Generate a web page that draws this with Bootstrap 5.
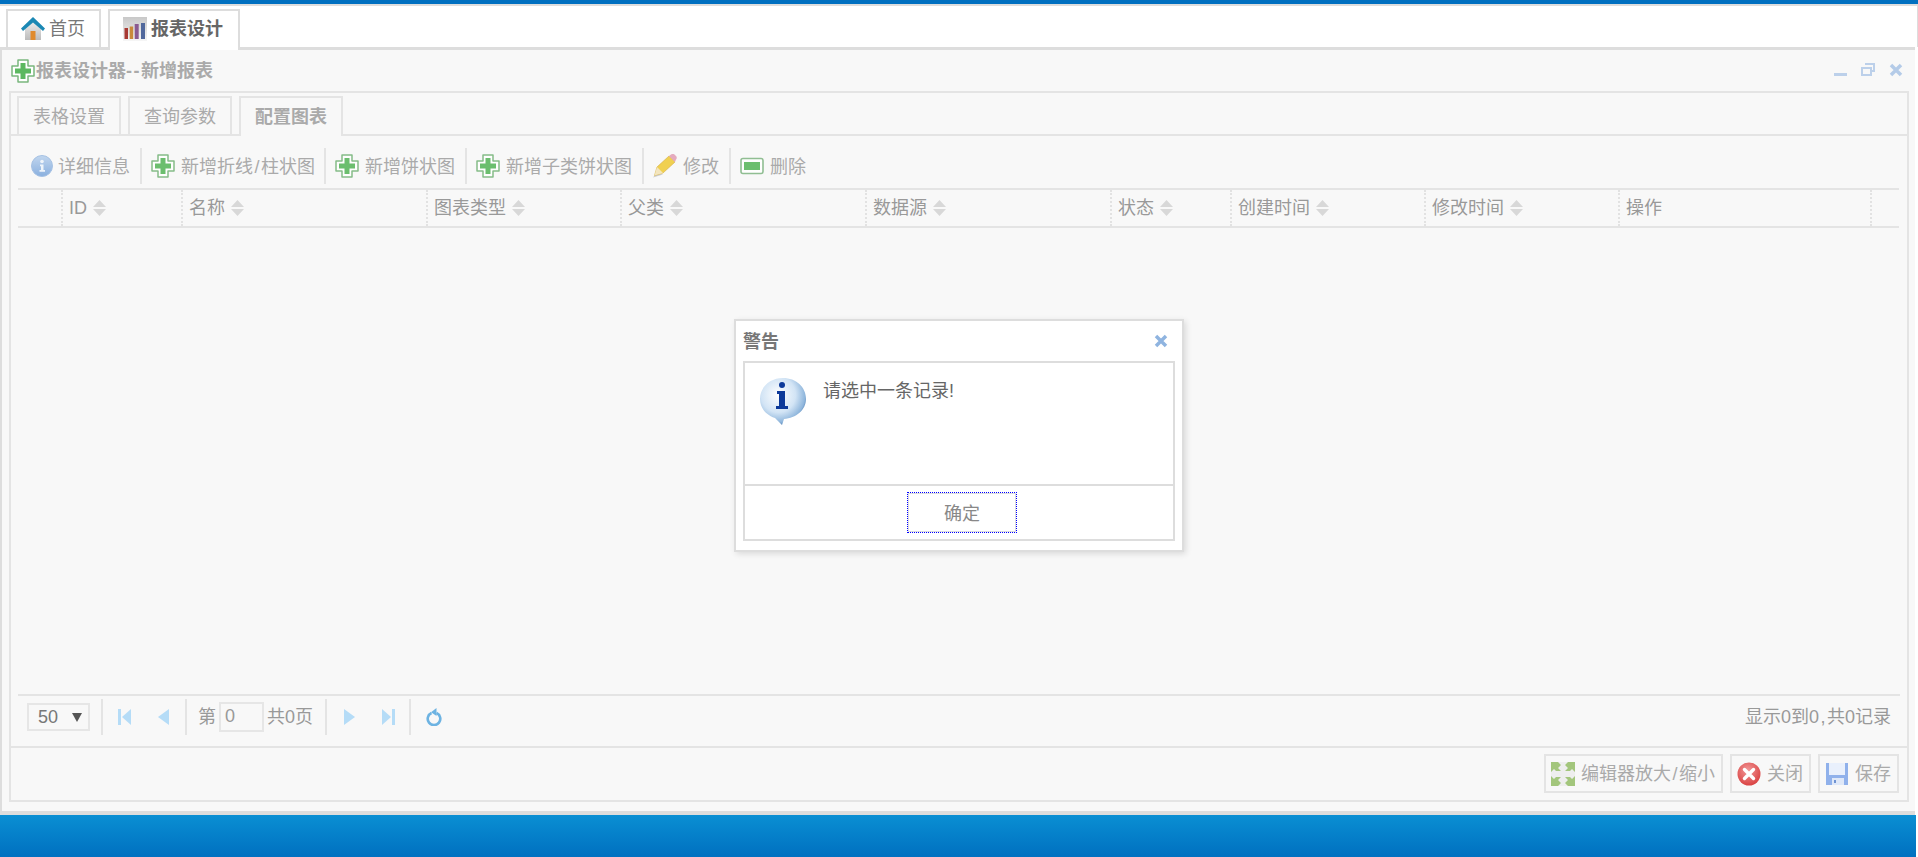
<!DOCTYPE html>
<html lang="zh-CN">
<head>
    <meta charset="UTF-8">
    <meta name="viewport" content="width=device-width, initial-scale=1.0">
    <title>报表设计</title>
    <link rel="stylesheet" href="https://cdn.jsdelivr.net/npm/bootstrap@5.3.0/dist/css/bootstrap.min.css">
    <style>
        html, body { height: 857px; overflow: hidden; }
        body {
            width: 1918px;
            background: #fff;
            font-family: "Liberation Sans", "Noto Sans CJK SC", sans-serif;
            font-size: 18px;
            line-height: 24px;
            color: #999;
            position: relative;
        }
        .svg-defs { width: 0; height: 0; display: block; }
        .ico-24 { width: 24px; height: 24px; flex: none; }
        .wide-slash { padding: 0 1.5px; }
        .wide-dash { letter-spacing: 1.5px; }

        /* top tab strip */
        .top-strip {
            height: 47px;
            border-top: 4px solid #0070c0;
            box-shadow: inset 0 2px 0 #ddd, inset -1px 0 0 #ddd;
            padding: 5px 0 0 6px;
            gap: 7px;
        }
        .top-tab {
            height: 38px;
            padding: 6px 14px 0 13px;
            gap: 4px;
            border: 2px solid #ddd;
            border-bottom: 0;
            color: #777;
        }
        .top-tab.on { height: 41px; font-weight: 700; color: #666; padding-right: 15px; z-index: 1; background: #fff; }

        /* main panel */
        .main-panel {
            height: 768px;
            margin-right: 3px;
            background: #f8f8f8;
            border: solid #ddd;
            border-width: 3px 0 4px 2px;
            padding: 0 6px 9px 7px;
        }
        .panel-head { height: 41px; padding-left: 2px; color: #aaa; font-weight: 700; }
        .panel-head .ttl { margin-left: 1px; }
        .win-btns { gap: 14px; padding-right: 6px; padding-bottom: 2px; }
        .win-btns svg { width: 14px; height: 14px; }
        .panel-box { border: 2px solid #e4e4e4; }

        /* inner tabs */
        .inner-tabs { height: 43px; padding: 3px 0 0 6px; gap: 7px; border-bottom: 2px solid #e4e4e4; }
        .inner-tab { width: 104px; height: 39px; border: 2px solid #e4e4e4; border-bottom: 0; color: #aaa; line-height: 38px; text-align: center; }
        .inner-tab.on { height: 40px; margin-bottom: -2px; background: #f8f8f8; font-weight: 700; }

        /* toolbar */
        .tool-row { height: 52px; padding: 12px 0 4px 12px; margin: 0 7px; color: #aaa; }
        .tool-item { gap: 6px; padding-right: 10px; }
        .tool-item:first-child { gap: 4px; }
        .tool-item:nth-child(2) { padding-right: 9px; }
        .tool-item + .tool-item { padding-left: 9px; border-left: 2px solid #e4e4e4; }
        .tool-item span { padding-top: 2px; }
        .tool-item svg { opacity: .9; }

        /* grid */
        .grid-wrap { margin: 0 7px; }
        .grid-head { table-layout: fixed; width: 1881px; margin: 0; --bs-table-bg: transparent; --bs-table-color: #999; }
        .grid-head th {
            height: 38px;
            padding: 0 0 0 6px;
            font-weight: 400;
            vertical-align: middle;
            border-top: 2px solid #e4e4e4;
            border-bottom: 2px solid #e4e4e4;
            border-left: 2px dotted #e2e2e2;
            white-space: nowrap;
        }
        .grid-head th:first-child { border-left: 0; }
        .sort-ico { width: 13px; height: 16px; margin-left: 5.5px; vertical-align: -2px; }
        .c-chk { width: 44px; } .c-id { width: 120px; } .c-name { width: 245px; } .c-type { width: 194px; }
        .c-par { width: 245px; } .c-src { width: 245px; } .c-st { width: 120px; } .c-cr { width: 194px; }
        .c-up { width: 194px; } .c-op { width: 252px; } .c-end { width: 28px; }

        /* pager */
        .pager-row {
            height: 52px;
            margin: 0 7px;
            padding: 3px 9px 11px 9px;
            border-top: 2px solid #e4e4e4;
        }
        .page-sel { width: 63px; height: 28px; border: 2px solid #e6e6e6; padding-left: 9px; color: #777; line-height: 24px; }
        .page-sel svg { margin-left: 14px; vertical-align: 1px; }
        .pg-sep { width: 2px; height: 36px; background: #e4e4e4; flex: none; }
        .pg-in { width: 45px; height: 30px; margin: 0 3px; border: 2px solid #e6e6e6; padding-left: 4px; color: #999; line-height: 24px; }
        .pg-ico { flex: none; }
        .gap-l11 { margin-left: 11px; }
        .gap-l12 { margin-left: 12px; }
        .gap-l14 { margin-left: 14px; }
        .gap-l15 { margin-left: 15px; }
        .gap-l16 { margin-left: 16px; }
        .gap-l17 { margin-left: 17px; }
        .gap-l27 { margin-left: 27px; }

        /* bottom buttons */
        .foot-row { height: 54px; padding: 6px 8px 0 0; gap: 7px; border-top: 2px solid #e4e4e4; justify-content: flex-end; }
        .foot-btn {
            height: 39px;
            padding: 1px 6px 0 5px;
            gap: 6px;
            --bs-btn-border-radius: 0;
            --bs-btn-border-width: 2px;
            --bs-btn-border-color: #e4e4e4;
            --bs-btn-color: #aaa;
            --bs-btn-font-size: 18px;
            --bs-btn-line-height: 24px;
        }
        .bot-band { height: 42px; margin-right: 2px; background: linear-gradient(#0a8fd3, #0070c0); }

        /* dialog */
        .dlg {
            position: absolute;
            left: 734px;
            top: 319px;
            width: 450px;
            height: 233px;
            background: #fff;
            border: 2px solid #ddd;
            box-shadow: 2px 2px 6px rgba(0, 0, 0, .12);
            padding: 0 7px;
        }
        .dlg-head { height: 40px; color: #777; font-weight: 700; padding-top: 2px; }
        .dlg-head svg { width: 14px; height: 14px; margin-right: 7px; margin-bottom: 2px; }
        .dlg-box { height: 180px; border: 2px solid #ddd; }
        .dlg-msg { height: 123px; padding: 14px 0 0 14px; gap: 16px; color: #666; border-bottom: 2px solid #ddd; }
        .dlg-msg svg { width: 48px; height: 48px; }
        .dlg-msg span { padding-top: 2px; }
        .dlg-foot { padding-top: 6px; }
        .dlg-ok {
            width: 110px;
            height: 41px;
            margin-left: 6px;
            padding: 8px 0 6px;
            --bs-btn-border-radius: 0;
            --bs-btn-border-width: 1px;
            --bs-btn-color: #888;
            --bs-btn-font-size: 18px;
            --bs-btn-line-height: 24px;
            border: 1px dotted #00f;
            box-shadow: inset 0 0 0 1px #ddd;
        }
    </style>
</head>
<body class="d-flex flex-column">
    <svg class="svg-defs">
        <defs>
            <linearGradient id="gBall" x1="0" y1="0" x2="0" y2="1"><stop offset="0" stop-color="#bcd3ee"/><stop offset="1" stop-color="#7ea8dc"/></linearGradient>
            <radialGradient id="gBub" cx=".4" cy=".36" r=".68"><stop offset="0" stop-color="#fff"/><stop offset=".55" stop-color="#d2e4f5"/><stop offset=".85" stop-color="#8fb6dc"/><stop offset="1" stop-color="#3f6fa8"/></radialGradient>
            <radialGradient id="gRed" cx=".45" cy=".35" r=".7"><stop offset="0" stop-color="#f29a9a"/><stop offset="1" stop-color="#d83c3c"/></radialGradient>
            <linearGradient id="gWall" x1="0" y1="0" x2="0" y2="1"><stop offset="0" stop-color="#eee"/><stop offset="1" stop-color="#bbb"/></linearGradient>
            <linearGradient id="gChart" x1="0" y1="0" x2="0" y2="1"><stop offset="0" stop-color="#c8c8c8"/><stop offset="1" stop-color="#f6f6f6"/></linearGradient>
        </defs>
        <symbol id="i-home" viewBox="0 0 24 24">
            <path d="M4 11 12 4l8 7v12H4z" fill="url(#gWall)"/>
            <rect x="9.500" y="14" width="5" height="9" fill="#e08a2c"/>
            <path d="M12 0 0 11.500l2 2.500L12 5.500 22 14l2-2.500z" fill="#1b88b4"/>
        </symbol>
        <symbol id="i-chart" viewBox="0 0 24 24">
            <rect x="0" y="0" width="24" height="24" fill="url(#gChart)"/>
            <rect x="1.500" y="11" width="3.500" height="11" fill="#a83a34"/>
            <rect x="6.700" y="9.500" width="3.500" height="12.500" fill="#c98a3a"/>
            <rect x="11.700" y="7" width="4" height="15" fill="#8a5a90"/>
            <rect x="18" y="6" width="4" height="16" fill="#51689c"/>
        </symbol>
        <symbol id="i-plus" viewBox="0 0 24 24">
            <path d="M7 1h10v6h6v10h-6v6H7v-6H1V7h6z" fill="#fff" stroke="#7ab67d" stroke-width="1.500" stroke-linejoin="round"/>
            <path d="M9.500 4h5v5.500H20v5h-5.500V20h-5v-5.500H4v-5h5.500z" fill="#5cb860"/>
        </symbol>
        <symbol id="i-info" viewBox="0 0 24 24">
            <circle cx="12" cy="12" r="10.500" fill="url(#gBall)" stroke="#9dbce2"/>
            <circle cx="12" cy="7.500" r="1.800" fill="#eef4fb"/>
            <path d="M10 10.500h3.500V16H15v1.800H9.500V16H11v-3.800h-1z" fill="#eef4fb"/>
        </symbol>
        <symbol id="i-pencil" viewBox="0 0 24 24">
            <path d="M0 23.500l10-3-6-2z" fill="#c8c8c8"/>
            <path d="M1.500 21.500 4 13 16 2l6 6L10 19z" fill="#f0cc40" stroke="#d2a830" stroke-width=".6"/>
            <path d="M1.500 21.500 4 13l6 6z" fill="#f3e3b8"/>
            <path d="M16 2l2-1.500c1-.8 2.500-.8 3.500 0l1.500 1.500c1 1 1 2.500 0 3.500L22 8z" fill="#e3a3b8"/>
        </symbol>
        <symbol id="i-minus" viewBox="0 0 24 24">
            <rect x="1" y="4.500" width="22" height="15" rx="2" fill="#fff" stroke="#85b888" stroke-width="1.600"/>
            <rect x="4" y="8" width="16" height="8" fill="#5cb860"/>
        </symbol>
        <symbol id="i-grow" viewBox="0 0 24 24">
            <rect width="24" height="24" fill="#eee"/>
            <path d="M0 0h7l3 3-3 3 3 3H5L3 7 0 10zM24 0h-7l-3 3 3 3-3 3h5l2-2 3 3zM0 24h7l3-3-3-3 3-3H5l-2 2-3-3zM24 24h-7l-3-3 3-3-3-3h5l2 2 3-3z" fill="#a3c67c"/>
        </symbol>
        <symbol id="i-close" viewBox="0 0 24 24">
            <circle cx="12" cy="12" r="11.500" fill="url(#gRed)"/>
            <path d="M7.500 7.500l9 9m0-9-9 9" stroke="#fff" stroke-width="3.400" stroke-linecap="round"/>
        </symbol>
        <symbol id="i-save" viewBox="0 0 24 24">
            <rect x="1" y="1" width="22" height="22" fill="#90b1eb"/>
            <rect x="4" y="1" width="16" height="12" fill="#e9f0fc"/>
            <rect x="7" y="16" width="12" height="7" fill="#dfe8f8"/>
            <rect x="9" y="18" width="2" height="3" fill="#6f93d2"/>
        </symbol>
        <symbol id="i-bubble" viewBox="0 0 48 48">
            <path d="M24 1C11 1 1 10 1 22c0 9 6 16 15 19l7 7 2-6c12-1 22-9 22-20C47 10 37 1 24 1z" fill="url(#gBub)"/>
            <circle cx="23" cy="8" r="3" fill="#0d3a9a"/>
            <path d="M18 14h8v15h3v3H17v-3h3V17h-2z" fill="#0d3a9a"/>
        </symbol>
        <symbol id="i-sort" viewBox="0 0 13 16">
            <path d="M6.500 0 13 7H0zM0 9h13l-6.500 7z" fill="#d8d8d8"/>
        </symbol>
    </svg>

    <div class="top-strip d-flex flex-shrink-0">
        <div class="top-tab d-flex"><svg class="ico-24"><use href="#i-home"/></svg><span>首页</span></div>
        <div class="top-tab on d-flex"><svg class="ico-24"><use href="#i-chart"/></svg><span>报表设计</span></div>
    </div>

    <div class="main-panel d-flex flex-column flex-shrink-0">
        <div class="panel-head d-flex align-items-center flex-shrink-0">
            <svg class="ico-24"><use href="#i-plus"/></svg>
            <span class="ttl">报表设计器<span class="wide-dash">--</span>新增报表</span>
            <div class="win-btns d-flex align-items-center ms-auto">
                <svg viewBox="0 0 14 14"><rect x="1" y="10" width="13" height="3" fill="#bcd0ea"/></svg>
                <svg viewBox="0 0 14 14"><path d="M4 1h9v7h-2M1 5h9v7H1z" fill="none" stroke="#bcd0ea" stroke-width="2"/></svg>
                <svg viewBox="0 0 14 14"><path d="M2 2l10 10M12 2 2 12" stroke="#b4cbe8" stroke-width="3.500"/></svg>
            </div>
        </div>

        <div class="panel-box d-flex flex-column flex-grow-1">
            <div class="inner-tabs d-flex flex-shrink-0">
                <div class="inner-tab">表格设置</div>
                <div class="inner-tab">查询参数</div>
                <div class="inner-tab on">配置图表</div>
            </div>

            <div class="tool-row d-flex align-items-stretch flex-shrink-0">
                <div class="tool-item d-flex align-items-center"><svg class="ico-24"><use href="#i-info"/></svg><span>详细信息</span></div>
                <div class="tool-item d-flex align-items-center"><svg class="ico-24"><use href="#i-plus"/></svg><span>新增折线<span class="wide-slash">/</span>柱状图</span></div>
                <div class="tool-item d-flex align-items-center"><svg class="ico-24"><use href="#i-plus"/></svg><span>新增饼状图</span></div>
                <div class="tool-item d-flex align-items-center"><svg class="ico-24"><use href="#i-plus"/></svg><span>新增子类饼状图</span></div>
                <div class="tool-item d-flex align-items-center"><svg class="ico-24"><use href="#i-pencil"/></svg><span>修改</span></div>
                <div class="tool-item d-flex align-items-center"><svg class="ico-24"><use href="#i-minus"/></svg><span>删除</span></div>
            </div>

            <div class="grid-wrap flex-grow-1">
                <table class="table grid-head">
                    <colgroup>
                        <col class="c-chk"><col class="c-id"><col class="c-name"><col class="c-type"><col class="c-par">
                        <col class="c-src"><col class="c-st"><col class="c-cr"><col class="c-up"><col class="c-op"><col class="c-end">
                    </colgroup>
                    <thead>
                        <tr>
                            <th></th>
                            <th>ID<svg class="sort-ico"><use href="#i-sort"/></svg></th>
                            <th>名称<svg class="sort-ico"><use href="#i-sort"/></svg></th>
                            <th>图表类型<svg class="sort-ico"><use href="#i-sort"/></svg></th>
                            <th>父类<svg class="sort-ico"><use href="#i-sort"/></svg></th>
                            <th>数据源<svg class="sort-ico"><use href="#i-sort"/></svg></th>
                            <th>状态<svg class="sort-ico"><use href="#i-sort"/></svg></th>
                            <th>创建时间<svg class="sort-ico"><use href="#i-sort"/></svg></th>
                            <th>修改时间<svg class="sort-ico"><use href="#i-sort"/></svg></th>
                            <th>操作</th>
                            <th></th>
                        </tr>
                    </thead>
                </table>
            </div>

            <div class="pager-row d-flex align-items-center flex-shrink-0">
                <div class="page-sel">50<svg width="10" height="9" viewBox="0 0 10 9"><path d="M0 0h10L5 9z" fill="#555"/></svg></div>
                <div class="pg-sep gap-l11"></div>
                <svg class="pg-ico gap-l15" width="13" height="16" viewBox="0 0 13 16"><path d="M0 0h3v16H0zM13 0v16L4 8z" fill="#b5dcf7"/></svg>
                <svg class="pg-ico gap-l27" width="11" height="16" viewBox="0 0 11 16"><path d="M11 0v16L0 8z" fill="#b5dcf7"/></svg>
                <div class="pg-sep gap-l16"></div>
                <span class="gap-l11">第</span>
                <div class="pg-in">0</div>
                <span>共0页</span>
                <div class="pg-sep gap-l12"></div>
                <svg class="pg-ico gap-l17" width="11" height="16" viewBox="0 0 11 16"><path d="M0 0v16L11 8z" fill="#b5dcf7"/></svg>
                <svg class="pg-ico gap-l27" width="13" height="16" viewBox="0 0 13 16"><path d="M10 0h3v16h-3zM0 0v16L9 8z" fill="#b5dcf7"/></svg>
                <div class="pg-sep gap-l14"></div>
                <svg class="pg-ico gap-l14" width="17" height="18" viewBox="0 0 17 18"><path d="M11.500 5a6.300 6.300 0 1 1-5 0" fill="none" stroke="#6db3e2" stroke-width="2.600"/><path d="M6 4.200 11.500 0v8z" fill="#6db3e2"/></svg>
                <span class="ms-auto">显示0到0<span class="wide-slash">,</span>共0记录</span>
            </div>

            <div class="foot-row d-flex flex-shrink-0">
                <button type="button" class="btn foot-btn d-flex align-items-center"><svg class="ico-24"><use href="#i-grow"/></svg><span>编辑器放大<span class="wide-slash">/</span>缩小</span></button>
                <button type="button" class="btn foot-btn d-flex align-items-center"><svg class="ico-24"><use href="#i-close"/></svg><span>关闭</span></button>
                <button type="button" class="btn foot-btn d-flex align-items-center"><svg class="ico-24"><use href="#i-save"/></svg><span>保存</span></button>
            </div>
        </div>
    </div>

    <div class="bot-band flex-shrink-0"></div>

    <div class="dlg">
        <div class="dlg-head d-flex align-items-center justify-content-between">
            <span>警告</span>
            <svg viewBox="0 0 14 14"><path d="M2 2l10 10M12 2 2 12" stroke="#8fb4e0" stroke-width="3.500"/></svg>
        </div>
        <div class="dlg-box">
            <div class="dlg-msg d-flex">
                <svg><use href="#i-bubble"/></svg>
                <span>请选中一条记录!</span>
            </div>
            <div class="dlg-foot text-center">
                <button type="button" class="btn dlg-ok">确定</button>
            </div>
        </div>
    </div>
</body>
</html>
